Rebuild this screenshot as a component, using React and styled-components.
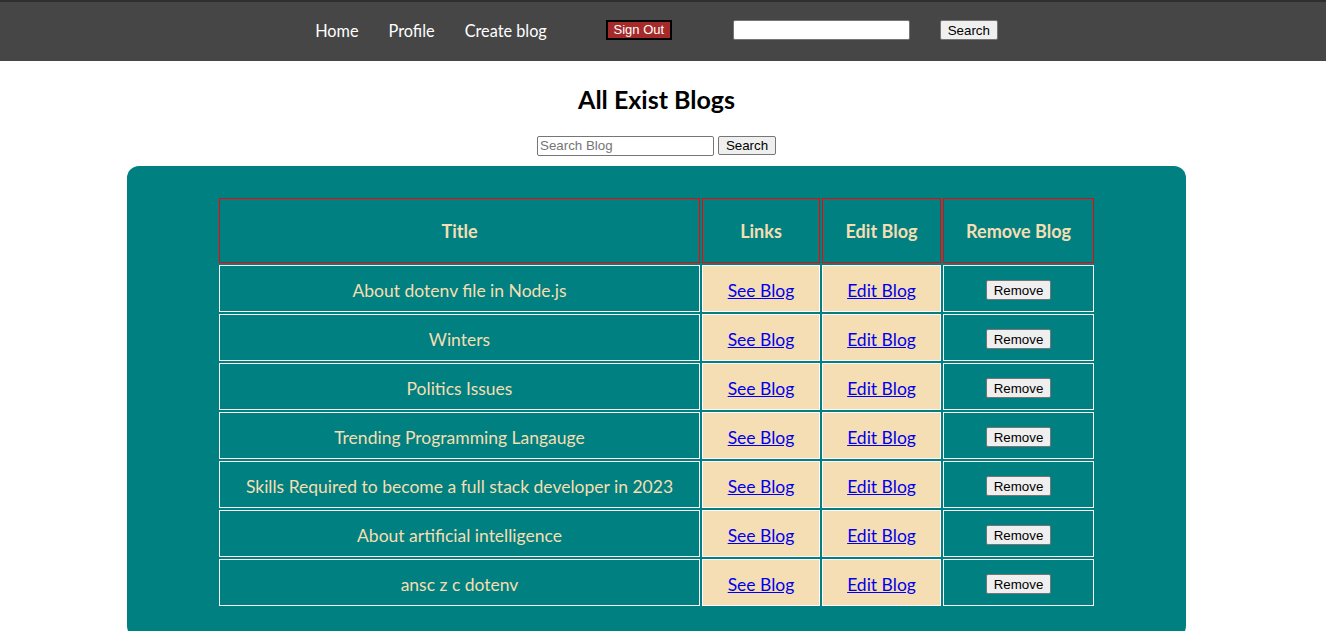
import React from 'react';
import styled, { createGlobalStyle } from 'styled-components';

const GlobalStyle = createGlobalStyle`
  * {
    box-sizing: border-box;
  }
  body {
    margin: 0;
    background: white;
    font-family: Lato, 'Open Sans', sans-serif;
  }
`;

const blogs = [
  'About dotenv file in Node.js',
  'Winters',
  'Politics Issues',
  'Trending Programming Langauge',
  'Skills Required to become a full stack developer in 2023',
  'About artificial intelligence',
  'ansc z c dotenv',
];

const NavBar = styled.nav`
  height: 61px;
  background: #464646;
  border-top: 2px solid #2e2e2e;
  display: flex;
  align-items: center;
  justify-content: center;
  padding-right: 13px;
  padding-bottom: 3px;
`;

const NavLink = styled.a`
  color: white;
  font-size: 16.3px;
  text-decoration: none;
  margin-right: ${(p) => p.gap || 30}px;
  margin-top: 1px;
`;

const SignOut = styled.button`
  width: 66px;
  height: 20px;
  background: #a52a2a;
  color: white;
  border: 2px solid black;
  font-family: 'Liberation Sans', Arial, sans-serif;
  font-size: 13px;
  padding: 0;
  margin-right: 61px;
  margin-top: -1px;
`;

const TextInput = styled.input`
  width: 177px;
  height: 20px;
  border: 1px solid #767676;
  border-radius: 2px;
  padding: 1px 2px;
  font-family: 'Liberation Sans', Arial, sans-serif;
  font-size: 13.33px;
  background: white;
  margin-right: ${(p) => p.gap || 0}px;
  &::placeholder {
    color: #757575;
  }
`;

const PlainButton = styled.button`
  width: ${(p) => p.w || 58}px;
  height: ${(p) => p.h || 20}px;
  background: #efefef;
  border: 1px solid #767676;
  border-radius: 2px;
  font-family: 'Liberation Sans', Arial, sans-serif;
  font-size: 13.33px;
  color: black;
  padding: 0;
`;

const Main = styled.main`
  padding-right: 13px;
  display: flex;
  flex-direction: column;
  align-items: center;
`;

const Heading = styled.h1`
  margin: 26px 0 0;
  font-size: 25px;
  font-weight: 700;
  line-height: 24px;
  color: black;
`;

const SearchRow = styled.div`
  display: flex;
  align-items: center;
  gap: 4px;
  margin-top: 24px;
  height: 21px;
`;

const Board = styled.section`
  width: 1059px;
  margin-top: 10px;
  background: #008080;
  border-radius: 12px;
  padding: 30px 0 30px;
  display: flex;
  justify-content: center;
`;

const Table = styled.table`
  width: 879px;
  table-layout: fixed;
  border-collapse: separate;
  border-spacing: 2px;
`;

const HeadCell = styled.th`
  width: ${(p) => p.w}px;
  height: 65px;
  border: 1px solid red;
  color: wheat;
  font-size: 18px;
  font-weight: 700;
  padding: 1px 0 0;
`;

const Cell = styled.td`
  height: 47px;
  border: 1px solid white;
  background: ${(p) => (p.light ? 'wheat' : '#008080')};
  color: wheat;
  font-size: 17.5px;
  text-align: center;
  padding: ${(p) => (p.action ? '1px 0 0' : '3px 0 0')};
`;

const BlogLink = styled.a`
  color: #0000ee;
  text-decoration: underline;
  font-size: 17.5px;
`;

const App = () => {
  return (
    <>
      <GlobalStyle />
      <NavBar>
        <NavLink href='#'>Home</NavLink>
        <NavLink href='#'>Profile</NavLink>
        <NavLink href='#' gap={59}>
          Create blog
        </NavLink>
        <SignOut>Sign Out</SignOut>
        <TextInput type='text' gap={30} />
        <PlainButton>Search</PlainButton>
      </NavBar>
      <Main>
        <Heading>All Exist Blogs</Heading>
        <SearchRow>
          <TextInput type='text' placeholder='Search Blog' />
          <PlainButton h={19}>Search</PlainButton>
        </SearchRow>
        <Board>
          <Table>
            <thead>
              <tr>
                <HeadCell w={481}>Title</HeadCell>
                <HeadCell w={118}>Links</HeadCell>
                <HeadCell w={119}>Edit Blog</HeadCell>
                <HeadCell w={151}>Remove Blog</HeadCell>
              </tr>
            </thead>
            <tbody>
              {blogs.map((title) => (
                <tr key={title}>
                  <Cell>{title}</Cell>
                  <Cell light>
                    <BlogLink href='#'>See Blog</BlogLink>
                  </Cell>
                  <Cell light>
                    <BlogLink href='#'>Edit Blog</BlogLink>
                  </Cell>
                  <Cell action>
                    <PlainButton w={65}>Remove</PlainButton>
                  </Cell>
                </tr>
              ))}
            </tbody>
          </Table>
        </Board>
      </Main>
    </>
  );
};

export default App;
